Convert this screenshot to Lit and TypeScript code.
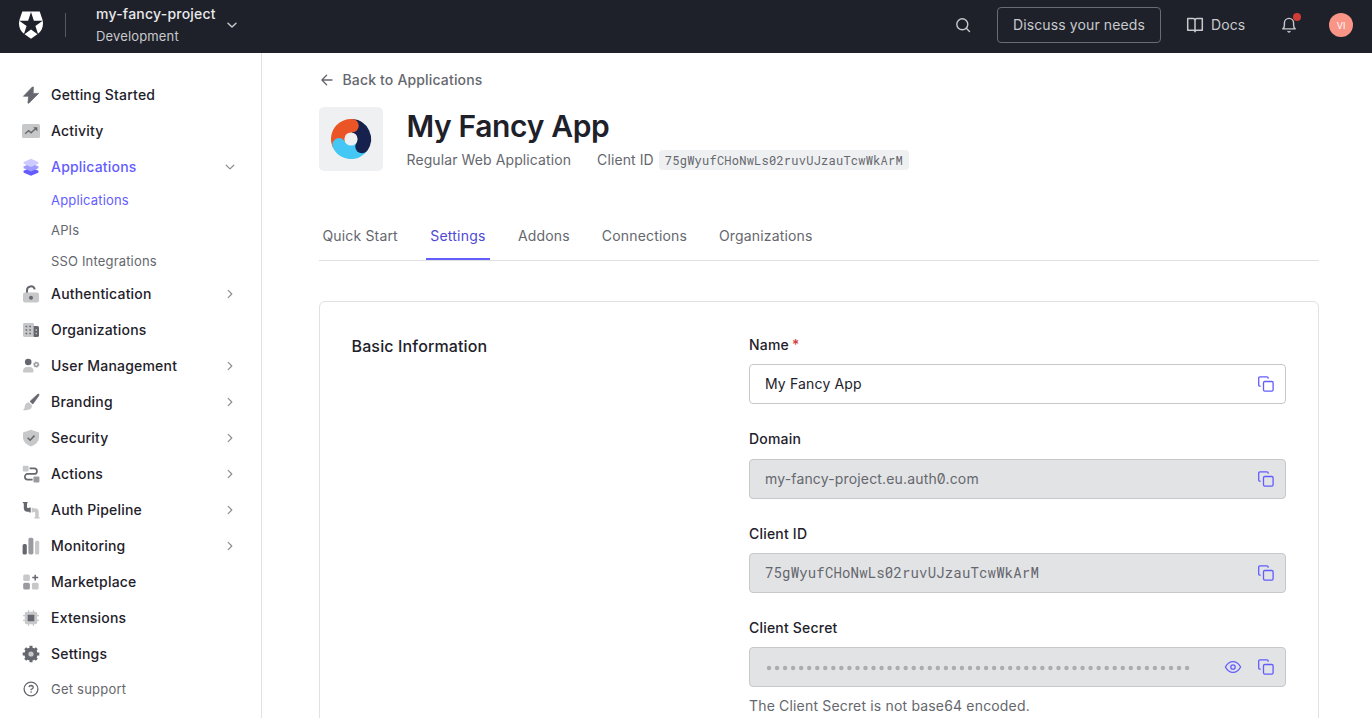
import { LitElement, html, svg, css, nothing } from "lit";
import { customElement, property } from "lit/decorators.js";
import { classMap } from "lit/directives/class-map.js";

const D = "#65676e";
const M = "#9a9ba0";
const L = "#c7c8ca";

const icons: Record<string, unknown> = {
  bolt: svg`<path d="M10.3 1 1.4 10.3h5.2L5.9 17l.9.3 9.8-9.9h-5.4L11.4 1z" fill=${D} stroke=${D} stroke-width=".7" stroke-linejoin="round"/>`,
  activity: svg`<rect x="0" y="2" width="18" height="14" rx="1.6" fill=${L}/><path d="M3.2 11.7 6.6 8.6l2.5 2.2 4.6-4.3" fill="none" stroke=${D} stroke-width="1.4"/><path d="M11.2 5.2h4.2v4.2z" fill=${D}/>`,
  layers: svg`<path d="m9 9.6 8 3.5-1.2.9 1 .6L9 17.7 1.2 14.6l1-.6L1 13.1z" fill="#635dff"/><path d="m9 5.2 8 3.6-1.2.7 1 .6L9 13.4 1.2 10.1l1-.6L1 8.8z" fill="#9e9aff"/><path d="m9 .8 7.8 3.5-1 .8.9.5L9 9 1.3 5.6l.9-.5-1-.8z" fill="#cdcbff"/>`,
  lock: svg`<path d="M5 8V5.2a3.9 3.9 0 0 1 7.7-.8" fill="none" stroke=${D} stroke-width="2"/><rect x="1" y="7.6" width="16" height="9.8" rx="1.8" fill=${L}/><circle cx="9" cy="12.7" r="2" fill=${D}/>`,
  org: svg`<rect x="1" y="2" width="11" height="14" rx="1.4" fill=${L}/><path d="M11.6 5h3.8Q17 5 17 6.6v7.8q0 1.6-1.6 1.6h-3.8z" fill=${D}/><path d="M3.600 5.500h1.600M7.300 5.500h1.600M3.600 9h1.600M7.300 9h1.600M3.600 12.500h1.600M7.300 12.500h1.600" stroke=${D} stroke-width="1.600"/><path d="M13.600 9h1.400M13.600 12.400h1.400" stroke=${L} stroke-width="1.400"/>`,
  users: svg`<circle cx="6.200" cy="5" r="3.300" fill=${D}/><path d="M1 14.400q0-4.500 4.100-4.500h2.400q4.100 0 4.100 4.500 0 1.100-1.100 1.100H2.100Q1 15.500 1 14.400z" fill=${L}/><circle cx="14.300" cy="7.600" r="1.900" fill="none" stroke=${M} stroke-width="1.500"/><circle cx="14.300" cy="7.600" r="2.800" fill="none" stroke=${M} stroke-width=".8" stroke-dasharray="1 1.930"/>`,
  brush: svg`<path d="M16.800 1q.7.600-.4 2.200L10.800 11 8 8.400l6.600-6.200Q16.200.700 16.800 1z" fill=${D} stroke=${D} stroke-width=".7"/><path d="M7 9.600l2.800 2.500q.8 2.400-1.200 3.900-2.700 1.700-7.800.9 1.600-.7 1.800-2.400.3-5.100 4.400-4.900z" fill=${L}/>`,
  shield: svg`<path d="m9 .7 8 2.800v5.300q0 5.400-8 8.700-8-3.300-8-8.700V3.500z" fill=${L}/><path d="m5.700 8.800 2.400 2.400 4.400-4.600" fill="none" stroke=${D} stroke-width="1.600"/>`,
  actions: svg`<rect x=".8" y=".8" width="5.800" height="5.800" rx="1" fill=${L}/><rect x="11.400" y="11.400" width="6" height="6" rx="1" fill=${M}/><path d="M7.600 3.400h4.600a2.700 2.700 0 0 1 0 5.500H5.700a2.800 2.800 0 0 0 0 5.700h4.900" fill="none" stroke=${D} stroke-width="1.700"/>`,
  pipe: svg`<path d="M.8.900h4.800v1.300H5v3.900q0 1 1 1h1.200v-.6h1.500v5H7.200v-.7H5.500q-3.700 0-3.700-3.700V2.200h-1z" fill=${D}/><path d="M9.700 6.700H11v.5h2q3.700 0 3.700 3.700V16h.8v1.400h-5V16h.7v-4q0-1-1-1H11v.5H9.700z" fill=${L}/>`,
  bars: svg`<rect x=".6" y="7" width="4.200" height="10.400" rx="1.500" fill=${D}/><rect x="6.400" y=".8" width="5" height="16.600" rx="1.700" fill=${M}/><rect x="13" y="3.800" width="4.200" height="13.600" rx="1.500" fill=${L}/>`,
  market: svg`<rect x="1.200" y="1.500" width="6.700" height="6.600" rx="1.500" fill=${L}/><rect x="1.200" y="9.800" width="6.700" height="6.800" rx="1.500" fill=${M}/><rect x="9.900" y="9.800" width="6.700" height="6.800" rx="1.500" fill=${L}/><path d="M13.200 1.700v5.900M10.300 4.600h5.900" stroke=${D} stroke-width="1.500"/>`,
  chip: svg`<path d="M6.600 1v16M11.400 1v16M1 6.600h16M1 11.400h16" stroke=${L} stroke-width="1.200"/><rect x="2.800" y="2.800" width="12.400" height="12.400" rx="1.800" fill=${L}/><rect x="5.700" y="5.700" width="6.600" height="6.600" rx=".6" fill=${D}/>`,
  gear: svg`<circle cx="9" cy="9" r="6.600" fill=${D}/><path d="M9 .7v16.600M.7 9h16.600M3.200 3.200l11.600 11.600M14.800 3.200 3.200 14.800" stroke=${D} stroke-width="3"/><circle cx="9" cy="9" r="2.600" fill=${L}/>`,
  help: svg`<circle cx="9" cy="9" r="6.900" fill="none" stroke=${D} stroke-width="1.300"/><path d="M6.900 7.100q.4-1.600 2.200-1.600 2.100.1 2.100 1.900 0 1.200-2.100 2v.8" fill="none" stroke=${D} stroke-width="1.300"/><circle cx="9.100" cy="12.100" r=".8" fill=${D}/>`,
};

const copyIcon = html`<svg width="18" height="18" viewBox="0 0 18 18" fill="none" stroke="#635dff" stroke-width="1.300" stroke-linejoin="round"><rect x="6.500" y="6.500" width="9.600" height="9.600" rx="1.300"/><path d="M3.700 11.200H3Q1.700 11.200 1.700 9.900V3.100q0-1.300 1.300-1.300h6.900q1.300 0 1.300 1.300v.7"/></svg>`;
const eyeIcon = html`<svg width="18" height="18" viewBox="0 0 18 18" fill="none" stroke="#635dff" stroke-width="1.300"><path d="M1.400 9Q4.300 3.600 9 3.600T16.600 9Q13.700 14.400 9 14.400T1.400 9z" stroke-linejoin="round"/><circle cx="9" cy="9" r="2.200"/></svg>`;

const chevron = (open: boolean) =>
  html`<svg class="chev" width="12" height="12" viewBox="0 0 12 12" fill="none" stroke="#8c8e94" stroke-width="1.200" stroke-linecap="round" stroke-linejoin="round"><path d=${open ? "M2.200 4.200 6 7.900l3.800-3.700" : "M4.200 2.400 7.800 6 4.200 9.600"}/></svg>`;

@customElement("top-bar")
class TopBar extends LitElement {
  static styles = css`
    :host { display: flex; align-items: center; height: 53px; background: #1e212a; color: #c8c9cc; font-size: 14px; letter-spacing: 0.12px; box-sizing: border-box; padding: 0 19px; flex: none; }
    .logo { display: block; margin: -3px 0 0 -1px; }
    .sep { width: 1px; height: 24px; background: #565860; margin: -3px 30px 0 21px; }
    .tenant { display: flex; flex-direction: column; height: 44px; margin-top: -4px; }
    .name { color: #e9e9eb; font-weight: 500; line-height: 22px; letter-spacing: 0.22px; }
    .env { font-size: 13px; line-height: 22px; letter-spacing: 0.15px; }
    .caret { margin: -3px 0 0 9px; }
    .right { margin-left: auto; display: flex; align-items: center; margin-top: -3px; }
    .discuss { box-sizing: border-box; width: 164px; height: 36px; border: 1px solid #6a6c73; border-radius: 4px; display: flex; align-items: center; justify-content: center; margin: 0 25px 0 25px; padding-bottom: 1px; }
    .docs { width: 34px; margin: 0 35px 0 7px; padding-bottom: 2px; }
    .bell { position: relative; display: flex; margin-right: 31px; }
    .dot { position: absolute; width: 8px; height: 8px; border-radius: 50%; background: #d03c38; left: 13px; top: -3px; }
    .avatar { width: 24px; height: 24px; border-radius: 50%; background: #f89586; color: #fff; font-size: 9px; letter-spacing: 0; display: flex; align-items: center; justify-content: center; }
  `;
  render() {
    return html`
      <svg class="logo" width="26" height="28" viewBox="0 0 26 28"><path d="M4.300.4h17.400l2.700 8.100c1.700 5.500-.2 11.400-4.700 14.600L13 27.800l-6.700-4.700C1.800 19.900-.1 14 1.600 8.500z" fill="#fff"/><path d="m13 .9 2.900 8.900h8.800l-7.300 5.300 2.900 8.700-7.300-5.300-7.300 5.300 2.900-8.700-7.300-5.300h8.800z" fill="#1e212a"/></svg>
      <div class="sep"></div>
      <div class="tenant"><span class="name">my-fancy-project</span><span class="env">Development</span></div>
      <svg class="caret" width="14" height="14" viewBox="0 0 14 14" fill="none" stroke="#c8c9cc" stroke-width="1.500" stroke-linecap="round" stroke-linejoin="round"><path d="m3 5.300 4 3.700 4-3.700"/></svg>
      <div class="right">
        <svg width="18" height="18" viewBox="0 0 18 18" fill="none" stroke="#c8c9cc" stroke-width="1.400" stroke-linecap="round"><circle cx="8.300" cy="8.300" r="5.500"/><path d="m12.300 12.300 3.200 3.200"/></svg>
        <div class="discuss">Discuss your needs</div>
        <svg width="18" height="18" viewBox="0 0 18 18" fill="none" stroke="#c8c9cc" stroke-width="1.500" stroke-linejoin="round"><path d="M9 4.500Q9 2.600 7 2.600H1.700v11.600h5.600Q9 14.200 9 15.700q0-1.500 1.700-1.500h5.600V2.600H11q-2 0-2 1.900zV15.500"/></svg>
        <span class="docs">Docs</span>
        <div class="bell"><svg width="18" height="18" viewBox="0 0 18 18" fill="none" stroke="#c8c9cc" stroke-width="1.400" stroke-linejoin="round" stroke-linecap="round"><path d="M2.800 12.900q1.600-1.300 1.600-3.600V7a4.600 4.600 0 0 1 9.200 0v2.300q0 2.300 1.600 3.600z"/><path d="M8 15.500q1 .9 2 0"/></svg><span class="dot"></span></div>
        <div class="avatar">VI</div>
      </div>`;
  }
}

interface NavEntry { icon: string; label: string; arrow?: boolean; active?: boolean; children?: string[]; }

const NAV: NavEntry[] = [
  { icon: "bolt", label: "Getting Started" },
  { icon: "activity", label: "Activity" },
  { icon: "layers", label: "Applications", arrow: true, active: true, children: ["Applications", "APIs", "SSO Integrations"] },
  { icon: "lock", label: "Authentication", arrow: true },
  { icon: "org", label: "Organizations" },
  { icon: "users", label: "User Management", arrow: true },
  { icon: "brush", label: "Branding", arrow: true },
  { icon: "shield", label: "Security", arrow: true },
  { icon: "actions", label: "Actions", arrow: true },
  { icon: "pipe", label: "Auth Pipeline", arrow: true },
  { icon: "bars", label: "Monitoring", arrow: true },
  { icon: "market", label: "Marketplace" },
  { icon: "chip", label: "Extensions" },
  { icon: "gear", label: "Settings" },
];

@customElement("side-nav")
class SideNav extends LitElement {
  static styles = css`
    :host { display: block; box-sizing: border-box; width: 262px; flex: none; border-right: 1px solid #e0e1e3; padding: 24px 25px 0 22px; color: #1e212a; font-size: 14px; letter-spacing: 0.2px; }
    .item { display: flex; align-items: center; height: 36px; font-weight: 500; }
    .item svg { flex: none; }
    .label { margin-left: 11px; flex: 1; padding-bottom: 2px; }
    .active { color: #635dff; }
    .sub { padding-left: 29px; height: 91px; display: flex; flex-direction: column; color: #65676e; font-size: 13px; letter-spacing: 0.17px; }
    .sub span { flex: 1; display: flex; align-items: center; }
    .sub .on { color: #635dff; }
    .support { height: 34px; color: #65676e; font-weight: 400; font-size: 13px; letter-spacing: 0.22px; }
    .support .label { padding-bottom: 0; }
  `;
  render() {
    return html`${NAV.map((n) => html`
      <div class=${classMap({ item: true, active: !!n.active })}>
        <svg width="18" height="18" viewBox="0 0 18 18">${icons[n.icon]}</svg>
        <span class="label">${n.label}</span>
        ${n.arrow ? chevron(!!n.children) : nothing}
      </div>
      ${n.children ? html`<div class="sub">${n.children.map((c, i) => html`<span class=${classMap({ on: i === 0 })}>${c}</span>`)}</div>` : nothing}`)}
      <div class="item support"><svg width="18" height="18" viewBox="0 0 18 18">${icons.help}</svg><span class="label">Get support</span></div>`;
  }
}

@customElement("form-field")
class FormField extends LitElement {
  @property() label = "";
  @property() value = "";
  @property() kind = "text";
  @property({ type: Boolean }) required = false;
  @property({ type: Boolean }) locked = false;
  static styles = css`
    :host { display: block; height: 94.33px; font-size: 14px; letter-spacing: 0.2px; color: #1e212a; }
    .label { display: flex; gap: 3px; font-weight: 500; line-height: 20px; height: 29.4px; }
    .req { color: #d03c38; }
    .box { box-sizing: border-box; height: 40px; border: 1px solid #c7c8ca; border-radius: 4px; display: flex; align-items: center; padding: 0 10px 0 15px; gap: 15px; }
    .locked { background: #e2e3e5; color: #65676e; }
    .value { flex: 1; letter-spacing: 0.16px; font-feature-settings: "zero"; padding-bottom: 1px; }
    .mono { font-family: "Roboto Mono", "Liberation Mono", monospace; letter-spacing: 0.16px; }
    .box svg { flex: none; }
    .box .dots { margin-right: auto; }
  `;
  render() {
    const secret = this.kind === "secret";
    return html`<div class="label">${this.label}${this.required ? html`<span class="req">*</span>` : nothing}</div>
      <div class=${classMap({ box: true, locked: this.locked })}>
        ${secret
          ? html`<svg class="dots" width="430" height="10" viewBox="0 0 430 10" fill="#acadb0">${Array.from({ length: 53 }, (_, i) => svg`<circle cx=${(4 + i * 8.04).toFixed(2)} cy="6" r="2.200"/>`)}</svg>${eyeIcon}`
          : html`<span class=${classMap({ value: true, mono: this.kind === "mono" })}>${this.value}</span>`}
        ${copyIcon}
      </div>`;
  }
}

@customElement("app-root")
class AppRoot extends LitElement {
  static styles = css`
    :host { display: flex; flex-direction: column; height: 718px; overflow: hidden; background: #fff; font-family: Inter, sans-serif; font-size: 14px; color: #65676e; letter-spacing: 0.15px; }
    .body { display: flex; flex: 1; min-height: 0; }
    .main { width: 1000px; margin-left: 57px; padding-top: 17px; }
    .back { display: flex; align-items: center; height: 20px; font-weight: 500; letter-spacing: 0.16px; }
    .back svg { margin-right: 7.5px; }
    .back span { padding-bottom: 2px; }
    .app { display: flex; gap: 23.5px; margin-top: 17px; height: 64px; }
    .title { color: #1e212a; font-size: 30px; font-weight: 600; line-height: 38px; letter-spacing: -0.36px; }
    .meta { display: flex; align-items: center; height: 20px; margin-top: 5px; letter-spacing: 0.1px; }
    .meta span { padding-bottom: 2px; }
    .meta .cid { margin-left: 26px; }
    .meta .code { background: #eff0f2; border-radius: 4px; height: 20px; padding: 0 6px; margin-left: 5px; font: 12px/21px "Roboto Mono", "Liberation Mono", monospace; letter-spacing: 0.24px; }
    .tabs { display: flex; gap: 24px; margin-top: 41px; height: 48px; border-bottom: 1px solid #e0e1e3; }
    .tab { box-sizing: border-box; height: 48px; line-height: 48px; padding: 0 4px; letter-spacing: 0.16px; }
    .tab:first-child { padding-left: 3.5px; padding-right: 4.5px; }
    .current { color: #4e48d6; border-bottom: 2px solid #635dff; padding-right: 4.500px; letter-spacing: 0.200px; }
    .card { box-sizing: border-box; margin-top: 40px; height: 600px; border: 1px solid #e0e1e3; border-radius: 6px; padding: 33px 32px 0 31.5px; display: flex; justify-content: space-between; }
    .heading { color: #1e212a; font-size: 16px; font-weight: 500; line-height: 22px; letter-spacing: 0.14px; }
    .fields { width: 537px; }
    .hint { display: block; line-height: 20px; margin-top: -16px; letter-spacing: 0.17px; }
  `;
  render() {
    return html`<top-bar></top-bar>
      <div class="body">
        <side-nav></side-nav>
        <div class="main">
          <div class="back"><svg width="16" height="16" viewBox="0 0 16 16" fill="none" stroke="#65676e" stroke-width="1.300" stroke-linecap="round" stroke-linejoin="round"><path d="M13 8H3M7.600 3.200 2.900 8l4.700 4.800"/></svg><span>Back to Applications</span></div>
          <div class="app">
            <svg width="64" height="64" viewBox="0 0 64 64"><rect width="64" height="64" rx="5" fill="#eff0f2"/>
              <path d="M32 32 33.700 12.100A20 20 0 0 1 48.400 43.500z" fill="#16214d"/>
              <path d="M32 32 48.400 43.500A20 20 0 0 1 13.900 40.500z" fill="#44c7f4"/>
              <path d="M32 32 13.900 40.500A20 20 0 0 1 33.700 12.100z" fill="#eb5424"/>
              <circle cx="33.100" cy="18.700" r="6.650" fill="#eb5424"/>
              <circle cx="42.900" cy="39.600" r="6.650" fill="#16214d"/>
              <circle cx="20" cy="37.600" r="6.650" fill="#44c7f4"/>
              <circle cx="32" cy="32" r="6.600" fill="#eff0f2"/></svg>
            <div>
              <div class="title">My Fancy App</div>
              <div class="meta"><span>Regular Web Application</span><span class="cid">Client ID</span><span class="code">75gWyufCHoNwLs02ruvUJzauTcwWkArM</span></div>
            </div>
          </div>
          <div class="tabs">${["Quick Start", "Settings", "Addons", "Connections", "Organizations"].map((t) => html`<div class=${classMap({ tab: true, current: t === "Settings" })}>${t}</div>`)}</div>
          <div class="card">
            <div class="heading">Basic Information</div>
            <div class="fields">
              <form-field label="Name" value="My Fancy App" required></form-field>
              <form-field label="Domain" value="my-fancy-project.eu.auth0.com" locked></form-field>
              <form-field label="Client ID" value="75gWyufCHoNwLs02ruvUJzauTcwWkArM" kind="mono" locked></form-field>
              <form-field label="Client Secret" kind="secret" locked></form-field>
              <span class="hint">The Client Secret is not base64 encoded.</span>
            </div>
          </div>
        </div>
      </div>`;
  }
}
